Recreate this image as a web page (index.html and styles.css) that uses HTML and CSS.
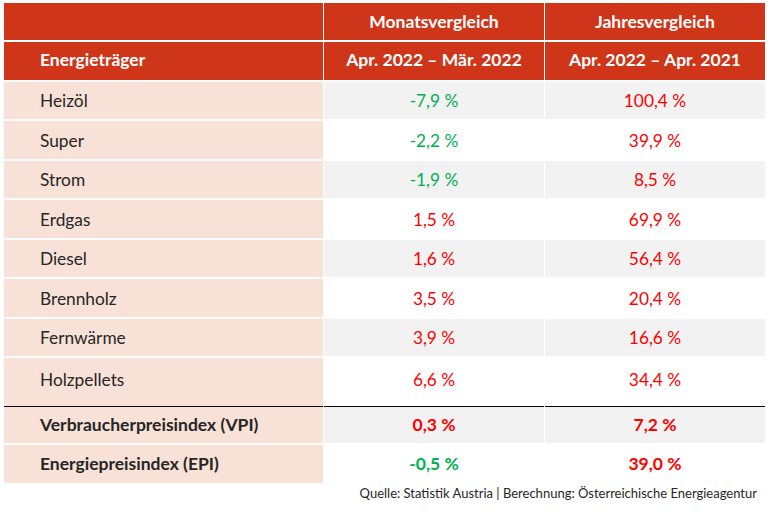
FILE: index.html
```html
<!DOCTYPE html>
<html lang="de">
<head>
<meta charset="utf-8">
<title>Energiepreise</title>
<link rel="stylesheet" href="styles.css">
</head>
<body>
<table class="tbl">
  <thead>
    <tr class="h1">
      <th class="lab"></th>
      <th>Monatsvergleich</th>
      <th>Jahresvergleich</th>
    </tr>
    <tr class="h2">
      <th class="lab">Energieträger</th>
      <th>Apr. 2022 – Mär. 2022</th>
      <th>Apr. 2022 – Apr. 2021</th>
    </tr>
  </thead>
  <tbody>
    <tr class="alt s"><td class="lab">Heizöl</td><td class="g">-7,9 %</td><td class="r">100,4 %</td></tr>
    <tr class="l"><td class="lab">Super</td><td class="g">-2,2 %</td><td class="r">39,9 %</td></tr>
    <tr class="alt s"><td class="lab">Strom</td><td class="g">-1,9 %</td><td class="r">8,5 %</td></tr>
    <tr class="l"><td class="lab">Erdgas</td><td class="r">1,5 %</td><td class="r">69,9 %</td></tr>
    <tr class="alt s"><td class="lab">Diesel</td><td class="r">1,6 %</td><td class="r">56,4 %</td></tr>
    <tr class="l"><td class="lab">Brennholz</td><td class="r">3,5 %</td><td class="r">20,4 %</td></tr>
    <tr class="alt s"><td class="lab">Fernwärme</td><td class="r">3,9 %</td><td class="r">16,6 %</td></tr>
    <tr class="tall"><td class="lab">Holzpellets</td><td class="r">6,6 %</td><td class="r">34,4 %</td></tr>
    <tr class="alt sum first"><td class="lab">Verbraucherpreisindex (VPI)</td><td class="r">0,3 %</td><td class="r">7,2 %</td></tr>
    <tr class="sum last"><td class="lab">Energiepreisindex (EPI)</td><td class="g">-0,5 %</td><td class="r">39,0 %</td></tr>
  </tbody>
</table>
<p class="src">Quelle: Statistik Austria | Berechnung: Österreichische Energieagentur</p>
</body>
</html>
```
FILE: styles.css
```css
html, body {
  margin: 0;
  padding: 0;
  background: #ffffff;
}
body {
  padding: 3px 4px 0 4px;
  font-family: Lato, "Open Sans", "Liberation Sans", sans-serif;
  color: #262626;
}
.tbl {
  width: 763px;
  border-collapse: separate;
  border-spacing: 1px 2px;
  margin: -2px -1px 0 -1px;
  table-layout: fixed;
  font-size: 17.3px;
}
.tbl th, .tbl td {
  padding: 0;
  text-align: center;
  vertical-align: middle;
}
.tbl th.lab, .tbl td.lab {
  width: 319px;
  text-align: left;
  padding-left: 36px;
  box-sizing: border-box;
}
.tbl th {
  background: #cf3519;
  color: #ffffff;
  font-weight: 700;
  font-size: 17.5px;
}
.tbl .h1 th { height: 37px; }
.tbl .h2 th { height: 35px; padding-bottom: 3px; }
.tbl tbody .s td { height: 37px; }
.tbl tbody .l td { height: 38px; }
.tbl td.lab { background: #f8e1d7; }
.tbl .alt td { background: #f2f2f2; }
.tbl .alt td.lab { background: #f8e1d7; }
.tbl tbody .tall td { height: 43px; padding-bottom: 3px; }
.tbl tbody .tall td.lab { box-shadow: 0 2px 0 #f8e1d7; }
.g { color: #00b050; }
.r { color: #ff0000; }
.tbl .sum td { font-weight: 700; font-size: 17.5px; }
.tbl tbody .sum.first td { height: 35px; padding-bottom: 1px; border-top: 1px solid #000000; }
.tbl tbody .sum.last td { height: 37px; padding-bottom: 1px; }
.src {
  margin: 0 10px 0 0;
  text-align: right;
  font-size: 13px;
  color: #262626;
}
```
